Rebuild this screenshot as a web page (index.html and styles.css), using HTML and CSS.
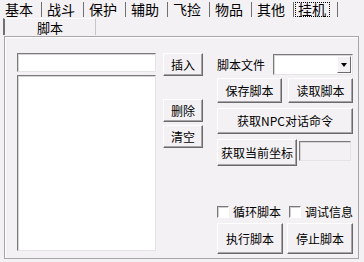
FILE: index.html
```html
<!DOCTYPE html>
<html lang="zh">
<head>
    <meta charset="UTF-8">
    <title>挂机 - 脚本</title>
    <link rel="stylesheet" href="styles.css">
</head>
<body>
    <div class="tabs">
        <span class="tab">基本</span>
        <span class="tab">战斗</span>
        <span class="tab">保护</span>
        <span class="tab">辅助</span>
        <span class="tab">飞捡</span>
        <span class="tab">物品</span>
        <span class="tab">其他</span>
        <span class="tab active"><span class="focus">挂机</span></span>
    </div>
    <div class="subtabs">
        <span class="subtab">脚本</span>
    </div>

    <div class="panel">
        <div class="col-left">
            <div class="edit line"></div>
            <div class="edit listbox"></div>
        </div>

        <div class="col-mid">
            <button class="btn small">插入</button>
            <button class="btn small del">删除</button>
            <button class="btn small">清空</button>
        </div>

        <div class="col-right">
            <div class="file-row">
                <span class="label">脚本文件</span>
                <div class="edit combo"><span class="drop"><span class="arrow"></span></span></div>
            </div>
            <div class="pair">
                <button class="btn half">保存脚本</button>
                <button class="btn half">读取脚本</button>
            </div>
            <button class="btn full">获取NPC对话命令</button>
            <div class="pos-row">
                <button class="btn pos">获取当前坐标</button>
                <div class="edit pos-box"></div>
            </div>

            <div class="checks">
                <span class="check"><span class="box"></span>循环脚本</span>
                <span class="check"><span class="box"></span>调试信息</span>
            </div>
            <div class="pair">
                <button class="btn run">执行脚本</button>
                <button class="btn run">停止脚本</button>
            </div>
        </div>
    </div>
</body>
</html>
```

FILE: styles.css
```css
body {
    margin: 0;
    width: 364px;
    height: 262px;
    background-color: #f4f1f4;
    font-family: "Noto Sans CJK SC", "DejaVu Sans", sans-serif;
    font-size: 12px;
    color: #000;
    overflow: hidden;
}

/* tab strip */
.tabs {
    display: flex;
    height: 17px;
    padding-top: 1px;
}
.tab {
    width: 42px;
    height: 15px;
    line-height: 15px;
    font-size: 14px;
    padding-left: 5px;
    box-sizing: border-box;
    border-right: 1px solid #707070;
    margin-top: 1px;
}
.tab.active {
    width: 44px;
    padding-left: 1px;
}
.focus {
    display: inline-block;
    height: 15px;
    line-height: 15px;
    padding: 0 4px 0 3px;
    outline: 1px dotted #000;
    outline-offset: -1px;
}

.subtabs {
    height: 18px;
    padding-left: 3px;
}
.subtab {
    display: inline-block;
    width: 93px;
    height: 17px;
    line-height: 17px;
    text-align: center;
    font-size: 13px;
    box-sizing: border-box;
    border-left: 2px solid #707070;
    border-top: 1px solid #fff;
    border-right: 1px solid #c8c4c8;
}

/* main frame */
.panel {
    display: flex;
    margin-left: 4px;
    width: 355px;
    height: 223px;
    box-sizing: border-box;
    border: 1px solid #a8a4a8;
    box-shadow: inset 1px 1px #fff;
    padding: 16px 0 0 12px;
}

.edit {
    background-color: #fff;
    box-sizing: border-box;
    border: 1px solid;
    border-color: #7a7a7a #e6e3e6 #e6e3e6 #7a7a7a;
    box-shadow: inset 1px 1px #d8d5d8;
}

.col-left {
    display: flex;
    flex-direction: column;
    gap: 3px;
    width: 139px;
}
.line {
    height: 19px;
}
.listbox {
    height: 176px;
}

.btn {
    font-family: inherit;
    font-size: 12px;
    color: #000;
    background-color: #f4f1f4;
    box-sizing: border-box;
    border: 1px solid;
    border-color: #fff #6a6a6a #6a6a6a #fff;
    box-shadow: inset -1px -1px #a8a4a8;
    padding: 0;
    line-height: 1;
}

.col-mid {
    display: flex;
    flex-direction: column;
    margin-left: 7px;
    width: 40px;
}
.small {
    width: 40px;
    height: 23px;
    margin-bottom: 3px;
}
.del {
    margin-top: 20px;
}

.col-right {
    display: flex;
    flex-direction: column;
    margin-left: 14px;
    width: 136px;
}
.file-row {
    display: flex;
    align-items: center;
    height: 21px;
    margin-top: 1px;
}
.label {
    width: 56px;
}
.combo {
    position: relative;
    width: 80px;
    height: 21px;
}
.drop {
    position: absolute;
    right: 1px;
    top: 1px;
    width: 14px;
    height: 17px;
    background-color: #f4f1f4;
    border: 1px solid;
    border-color: #fff #6a6a6a #6a6a6a #fff;
    box-sizing: border-box;
}
.arrow {
    position: absolute;
    left: 3px;
    top: 6px;
    border-left: 3px solid transparent;
    border-right: 3px solid transparent;
    border-top: 4px solid #000;
}

.pair {
    display: flex;
    justify-content: space-between;
}
.half {
    width: 65px;
    height: 25px;
    margin-top: 3px;
}
.full {
    width: 136px;
    height: 26px;
    margin-top: 5px;
}
.pos-row {
    display: flex;
    align-items: flex-start;
    margin-top: 5px;
}
.pos {
    width: 80px;
    height: 27px;
}
.pos-box {
    width: 52px;
    height: 20px;
    margin-left: 2px;
    margin-top: 2px;
    background-color: #f4f1f4;
}

.checks {
    display: flex;
    justify-content: space-between;
    margin-top: auto;
    width: 136px;
    height: 14px;
    line-height: 14px;
    margin-bottom: 4px;
}
.check {
    display: flex;
    align-items: center;
    gap: 4px;
    font-size: 12px;
}
.box {
    width: 12px;
    height: 12px;
    box-sizing: border-box;
    background-color: #fff;
    border: 1px solid;
    border-color: #7a7a7a #fff #fff #7a7a7a;
    box-shadow: inset 1px 1px #d0cdd0;
}
.run {
    width: 66px;
    height: 31px;
    margin-bottom: 4px;
}
```
